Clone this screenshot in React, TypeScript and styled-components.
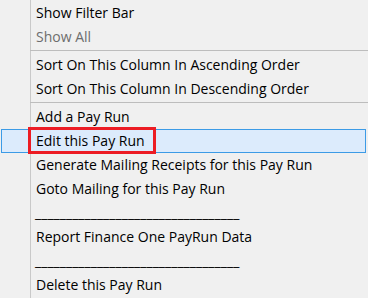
import React from "react";
import styled, { createGlobalStyle } from "styled-components";

const Global = createGlobalStyle`
  html, body { margin: 0; padding: 0; background: #f0f0f0; }
  body { font-family: "Open Sans", "Noto Sans", sans-serif; }
`;

const Menu = styled.div`
  position: relative;
  width: 368px;
  height: 298px;
  padding-top: 1px;
  box-sizing: border-box;
  background: #f0f0f0;
  overflow: hidden;
  font-family: "Open Sans", "Noto Sans", sans-serif;
  font-size: 14px;
  color: #000;
  &::before {
    content: "";
    position: absolute;
    left: 30px;
    top: 0;
    bottom: 0;
    width: 1px;
    background: #c9c9c9;
    z-index: 0;
  }
`;

const Item = styled.div<{ $disabled?: boolean; $active?: boolean }>`
  position: relative;
  z-index: 1;
  height: 24px;
  display: flex;
  align-items: center;
  box-sizing: border-box;
  padding-left: ${(p) => (p.$active ? "34px" : "36px")};
  margin: ${(p) => (p.$active ? "0 2px 0 1px" : "0")};
  color: ${(p) => (p.$disabled ? "#6d6d6d" : "#000")};
  background: ${(p) => (p.$active ? "#dcebfc" : "transparent")};
  border: ${(p) => (p.$active ? "1px solid #3c9be6" : "none")};
  white-space: nowrap;
  line-height: 24px;
`;

const Separator = styled.div`
  position: relative;
  z-index: 1;
  height: 4px;
  box-sizing: border-box;
  padding-top: 1px;
  margin-left: 30px;
  &::after {
    content: "";
    display: block;
    height: 1px;
    background: #bdbdbd;
  }
`;

const Rule = styled.span`
  display: inline-block;
  margin-left: -1px;
  white-space: nowrap;
  letter-spacing: 0.06px;
`;

const Mark = styled.div`
  position: absolute;
  left: 26px;
  top: -3px;
  width: 128px;
  height: 27px;
  border: 3px solid #ec1c24;
  box-sizing: border-box;
  pointer-events: none;
`;

export default function App() {
  const underscores = "_".repeat(33);
  return (
    <>
      <Global />
      <Menu>
        <Item>Show Filter Bar</Item>
        <Item $disabled>Show All</Item>
        <Separator />
        <Item>Sort On This Column In Ascending Order</Item>
        <Item>Sort On This Column In Descending Order</Item>
        <Separator />
        <Item>Add a Pay Run</Item>
        <Item $active>
          <Mark />
          Edit this Pay Run
        </Item>
        <Item>Generate Mailing Receipts for this Pay Run</Item>
        <Item>Goto Mailing for this Pay Run</Item>
        <Item>
          <Rule>{underscores}</Rule>
        </Item>
        <Item>Report Finance One PayRun Data</Item>
        <Item>
          <Rule>{underscores}</Rule>
        </Item>
        <Item>Delete this Pay Run</Item>
      </Menu>
    </>
  );
}
